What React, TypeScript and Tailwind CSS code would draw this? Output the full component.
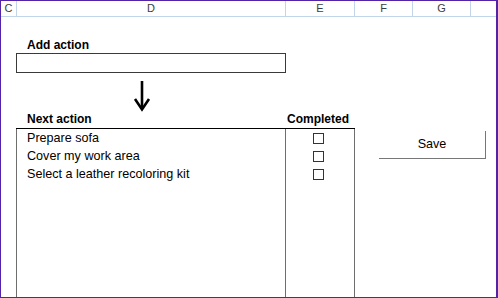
export default function App() {
  const items = ["Prepare sofa", "Cover my work area", "Select a leather recoloring kit"];

  return (
    <div className="w-[498px] h-[298px] overflow-hidden bg-white border-l border-t border-b border-r-2 border-[#5324a8] flex flex-col font-['Liberation_Sans',Arial,sans-serif] text-black">
      {/* column headers */}
      <div className="flex h-[16px] shrink-0 border-b border-[#c3d5ea] text-[11px] leading-[15px] text-[#3c3c3c]">
        <div className="w-[16px] border-r border-[#c3d5ea] text-center">C</div>
        <div className="w-[269px] border-r border-[#c3d5ea] text-center">D</div>
        <div className="w-[69px] border-r border-[#c3d5ea] text-center">E</div>
        <div className="w-[58px] border-r border-[#c3d5ea] text-center">F</div>
        <div className="w-[58px] border-r border-[#c3d5ea] text-center">G</div>
        <div className="flex-1" />
      </div>

      <div className="flex-1 flex flex-col min-h-0">
        <div className="mt-[20px] ml-[26px] text-[12px] leading-[16px] font-bold">Add action</div>
        <div className="ml-[15px] w-[270px] h-[20px] shrink-0 border border-[#3a3a3a]" />

        <svg className="ml-[129px] shrink-0" width="24" height="39" viewBox="0 0 24 39">
          <line x1="12" y1="8" x2="12" y2="35" stroke="#000" strokeWidth="2.6" />
          <polyline points="5,26 12,36.5 19,26" fill="none" stroke="#000" strokeWidth="2.6" />
        </svg>

        <div className="flex h-[16px] shrink-0 text-[12px] leading-[15px] font-bold">
          <div className="ml-[26px] w-[260px]">Next action</div>
          <div>Completed</div>
        </div>

        <div className="flex flex-1 items-start min-h-0">
          <div className="ml-[15px] flex self-stretch border-t border-black">
            <div className="w-[270px] border-l border-r border-[#6e6e6e] pl-[10px] text-[12.6px]">
              {items.map((t) => (
                <div key={t} className="h-[18px] leading-[18px]">
                  {t}
                </div>
              ))}
            </div>
            <div className="w-[69px] border-r border-[#6e6e6e] pr-[3px]">
              {items.map((t) => (
                <div key={t} className="h-[18px] flex items-center justify-center">
                  <div className="w-[11px] h-[11px] border border-[#333]" />
                </div>
              ))}
            </div>
          </div>

          <div className="ml-[24px] mt-[3px] w-[107px] h-[28px] border-r border-b border-[#777] flex items-center justify-center text-[12.6px]">
            Save
          </div>
        </div>
      </div>
    </div>
  );
}
